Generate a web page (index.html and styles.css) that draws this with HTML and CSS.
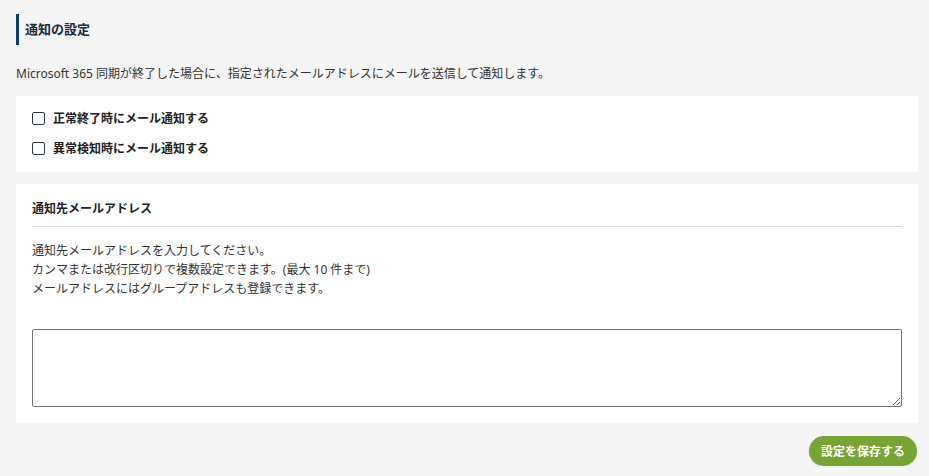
FILE: index.html
```html
<!DOCTYPE html>
<html lang="ja">
<head>
<meta charset="utf-8">
<title>通知の設定</title>
<link rel="stylesheet" href="styles.css">
</head>
<body>
<div class="page">
  <h2 class="section-title">通知の設定</h2>
  <p class="desc">Microsoft 365 同期が終了した場合に、指定されたメールアドレスにメールを送信して通知します。</p>
  <div class="card card-checks">
    <label class="check-row"><input type="checkbox" class="check"><span>正常終了時にメール通知する</span></label>
    <label class="check-row"><input type="checkbox" class="check"><span>異常検知時にメール通知する</span></label>
  </div>
  <div class="card card-mail">
    <h3 class="card-heading">通知先メールアドレス</h3>
    <p class="help">通知先メールアドレスを入力してください。<br>カンマまたは改行区切りで複数設定できます。(最大 10 件まで)<br>メールアドレスにはグループアドレスも登録できます。</p>
    <textarea class="mail-input"></textarea>
  </div>
  <div class="actions">
    <button class="save-btn">設定を保存する</button>
  </div>
</div>
</body>
</html>
```
FILE: styles.css
```css
html, body {
  margin: 0;
  padding: 0;
  background: #f5f5f5;
}
body {
  font-family: "Noto Sans", "Noto Sans CJK JP", sans-serif;
  font-size: 12px;
  color: #333;
}
.page {
  padding: 14px 11px 0 16px;
}
.section-title {
  margin: 0;
  height: 31px;
  line-height: 31px;
  border-left: 3px solid #0b3d6b;
  padding-left: 6px;
  font-size: 13px;
  font-weight: bold;
  color: #1c2b3a;
}
.desc {
  margin: 20px 0 13px;
  line-height: 18px;
  color: #333;
}
.card {
  background: #fff;
}
.card-checks {
  display: flex;
  flex-direction: column;
  gap: 12px;
  padding: 13px 16px 15px;
}
.check-row {
  display: flex;
  align-items: center;
  height: 18px;
  font-weight: bold;
  color: #222;
}
.check {
  appearance: none;
  -webkit-appearance: none;
  width: 13px;
  height: 13px;
  margin: 0 8px 0 0;
  border: 1px solid #303842;
  border-radius: 2px;
  background: #fff;
}
.card-mail {
  margin-top: 12px;
  padding: 16px 16px 16px;
  display: flex;
  flex-direction: column;
}
.card-heading {
  margin: 0;
  font-size: 12px;
  font-weight: bold;
  line-height: 18px;
  padding-bottom: 8px;
  border-bottom: 1px solid #d9d9d9;
  color: #222;
}
.help {
  margin: 14px 0 0;
  line-height: 19px;
  color: #333;
}
.mail-input {
  margin-top: 31px;
  box-sizing: border-box;
  width: 100%;
  height: 78px;
  border: 1px solid #767676;
  border-radius: 2px;
  padding: 2px;
  font-family: inherit;
  font-size: 12px;
  background: #fff;
}
.actions {
  display: flex;
  justify-content: flex-end;
  margin-top: 13px;
  padding-right: 1px;
}
.save-btn {
  width: 108px;
  height: 30px;
  border: none;
  border-radius: 15px;
  background: #78a436;
  color: #fff;
  font-family: inherit;
  font-size: 12px;
  font-weight: bold;
  box-shadow: 0 1px 2px rgba(0,0,0,0.15);
  padding: 0;
}
```
